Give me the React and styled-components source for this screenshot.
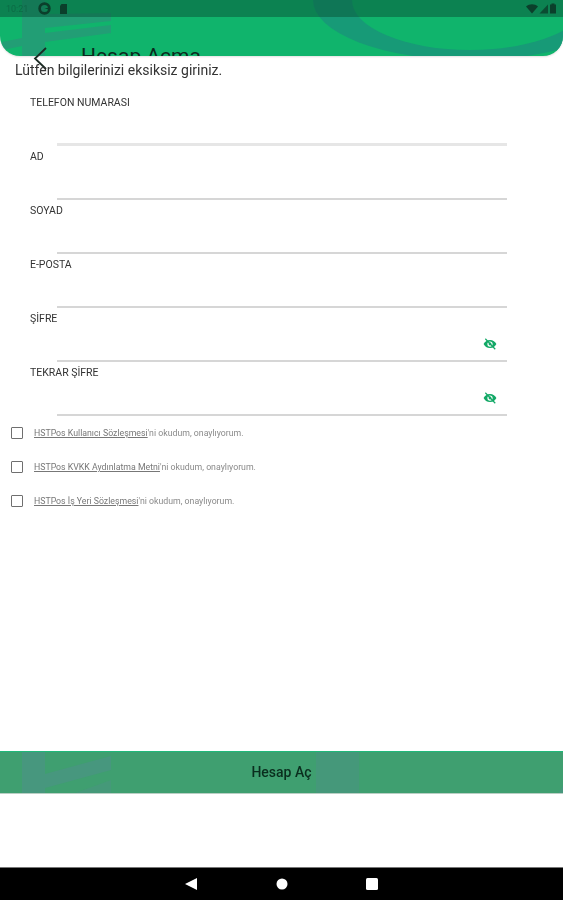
import React from 'react'
import styled, { createGlobalStyle } from 'styled-components'

const GlobalStyle = createGlobalStyle`
  html, body { margin: 0; padding: 0; background: #fff; }
  * { box-sizing: border-box; }
  body { font-family: Roboto, "Liberation Sans", sans-serif; }
`

const Screen = styled.div`
  position: relative;
  width: 563px;
  height: 900px;
  overflow: hidden;
  display: flex;
  flex-direction: column;
  background: #fff;
`

const Header = styled.header`
  position: relative;
  flex: 0 0 56px;
  background: #10b46c;
  border-radius: 0 0 20px 20px;
  overflow: hidden;
  box-shadow: 0 1px 2px rgba(0, 0, 0, 0.12);
`

const Art = styled.svg`
  position: absolute;
  inset: 0;
`

const StatusBar = styled.div`
  position: relative;
  height: 17px;
  padding: 0 6px 0 6px;
  display: flex;
  align-items: center;
  gap: 8px;
  background: rgba(10, 90, 60, 0.55);
  color: #0c5a3c;
`

const Time = styled.span`
  font-size: 9px;
  width: 24px;
  opacity: 0.6;
  filter: blur(0.4px);
`

const StatusRight = styled.div`
  margin-left: auto;
  display: flex;
  align-items: center;
  gap: 1px;
`

const Title = styled.h1`
  position: relative;
  margin: 0;
  padding: 27px 0 0 81px;
  font-size: 21px;
  line-height: 24px;
  font-weight: 400;
  color: #0a2a1d;
  white-space: nowrap;
`

const BackIcon = styled.svg`
  position: absolute;
  left: 32px;
  top: 46px;
`

const Intro = styled.p`
  margin: 0;
  padding: 6px 0 0 15px;
  height: 37px;
  font-size: 14px;
  line-height: 17px;
  color: #333;
  filter: blur(0.4px);
`

const Form = styled.div`
  display: flex;
  flex-direction: column;
`

const Field = styled.div`
  position: relative;
  height: 54px;
  width: 507px;
  padding-left: 30px;
  display: flex;
  flex-direction: column;
`

const Label = styled.label`
  font-size: 10.5px;
  line-height: 12px;
  height: 12px;
  margin-top: 4px;
  color: #333;
  filter: blur(0.4px);
`

const Underline = styled.div`
  margin: ${(p) => (p.$thick ? '34px' : '35px')} 0 0 27px;
  height: ${(p) => (p.$thick ? '3px' : '2px')};
  background: ${(p) => (p.$thick ? '#e6e6e6' : '#d6d6d6')};
`

const EyeIcon = styled.svg`
  position: absolute;
  right: 10px;
  top: 28px;
`

const Terms = styled.div`
  display: flex;
  flex-direction: column;
  gap: 20px;
  padding: 9px 0 0 11px;
`

const TermRow = styled.div`
  display: flex;
  align-items: center;
  gap: 11px;
  height: 14px;
`

const Box = styled.span`
  flex: 0 0 12px;
  height: 12px;
  border: 1.5px solid #6f6f6f;
  border-radius: 1px;
`

const TermText = styled.span`
  font-size: 8.75px;
  line-height: 12px;
  color: #8a8a8a;
  filter: blur(0.45px);
  a {
    color: #777;
    text-decoration: underline;
  }
`

const Spacer = styled.div`
  flex: 1;
`

const SubmitBar = styled.button`
  position: relative;
  flex: 0 0 43px;
  margin-bottom: 106px;
  padding: 0 0 2px;
  border: 0;
  border-top: 1px solid #1fb87a;
  border-bottom: 1px solid #b9cfc4;
  background: #3f9f70;
  overflow: hidden;
  font-family: inherit;
`

const SubmitLabel = styled.span`
  position: relative;
  font-size: 14px;
  font-weight: 500;
  color: #0a2e1e;
  filter: blur(0.3px);
`

const NavBar = styled.nav`
  position: absolute;
  left: 0;
  right: 0;
  bottom: 0;
  height: 33px;
  background: #000;
  border-top: 1px solid #777;
`

const NavIcons = styled.svg`
  display: block;
`

const fields = [
  { label: 'TELEFON NUMARASI', thick: true },
  { label: 'AD' },
  { label: 'SOYAD' },
  { label: 'E-POSTA' },
  { label: 'ŞİFRE', secret: true },
  { label: 'TEKRAR ŞİFRE', secret: true },
]

const terms = [
  { link: 'HSTPos Kullanıcı Sözleşmesi', rest: "'ni okudum, onaylıyorum." },
  { link: 'HSTPos KVKK Aydınlatma Metni', rest: "'ni okudum, onaylıyorum." },
  { link: 'HSTPos İş Yeri Sözleşmesi', rest: "'ni okudum, onaylıyorum." },
]

const Eye = () => (
  <EyeIcon width="14" height="14" viewBox="0 0 24 24" fill="#12a866">
    <path d="M12 5C7 5 2.7 8.1 1 12c1.7 3.9 6 7 11 7s9.3-3.1 11-7c-1.7-3.9-6-7-11-7zm0 11.500a4.500 4.500 0 1 1 0-9 4.500 4.500 0 0 1 0 9z" />
    <circle cx="12" cy="12" r="2.4" />
    <path d="M4 3l17 18" stroke="#12a866" strokeWidth="2" />
  </EyeIcon>
)

export default function App() {
  return (
    <Screen>
      <GlobalStyle />
      <Header>
        <Art width="563" height="56" viewBox="0 0 563 56">
          <path d="M22 0h23v14l66-1v8l-66 7v5l66-8v8l-66 9v14H22V46L2 50V42l20-4V0z" fill="#2f8f7c" opacity="0.6" />
          <ellipse cx="470" cy="0" rx="157" ry="60" fill="#179a77" />
          <ellipse cx="470" cy="0" rx="118" ry="50" fill="#10b46c" />
        </Art>
        <StatusBar>
          <Time>10:21</Time>
          <svg width="13" height="13" viewBox="0 0 24 24"><circle cx="12" cy="12" r="9" fill="none" stroke="#0b3f2b" strokeWidth="5" /><path d="M12 12l9-2v4z" fill="#0b3f2b" /></svg>
          <svg width="9" height="12" viewBox="0 0 18 24"><path d="M5 2h11v20H2V6z" fill="#0b3f2b" /></svg>
          <StatusRight>
            <svg width="12" height="10" viewBox="0 0 24 20"><path d="M12 19L0 5c7-6 17-6 24 0z" fill="#0b3f2b" /></svg>
            <svg width="9" height="10" viewBox="0 0 18 20"><path d="M18 1v18H1z" fill="#0b3f2b" opacity="0.8" /></svg>
            <svg width="8" height="11" viewBox="0 0 16 22"><path d="M5 1h6v2h3v18H2V3h3z" fill="#0b3f2b" /></svg>
          </StatusRight>
        </StatusBar>
        <Title>Hesap Açma</Title>
      </Header>
      <BackIcon width="18" height="24" viewBox="0 0 18 24">
        <path d="M14 2L3 12.500 14 23" fill="none" stroke="#1b2a24" strokeWidth="1.8" />
      </BackIcon>

      <Intro>Lütfen bilgilerinizi eksiksiz giriniz.</Intro>

      <Form>
        {fields.map((f) => (
          <Field key={f.label}>
            <Label>{f.label}</Label>
            <Underline $thick={f.thick} />
            {f.secret && <Eye />}
          </Field>
        ))}
      </Form>

      <Terms>
        {terms.map((t) => (
          <TermRow key={t.link}>
            <Box />
            <TermText><a>{t.link}</a>{t.rest}</TermText>
          </TermRow>
        ))}
      </Terms>

      <Spacer />

      <SubmitBar>
        <Art width="563" height="43" viewBox="0 0 563 43">
          <path d="M22 0h23v22l66-18v14l-66 18v7H22z" fill="#4f8f8a" opacity="0.55" />
          <path d="M111 28v15H70z" fill="#4f8f8a" opacity="0.35" />
          <path d="M316 0h43v43h-43z" fill="#4f8f8a" opacity="0.4" />
          <path d="M557 43l6-9v9z" fill="#4f8f8a" opacity="0.5" />
        </Art>
        <SubmitLabel>Hesap Aç</SubmitLabel>
      </SubmitBar>

      <NavBar>
        <NavIcons width="563" height="32" viewBox="0 0 563 32">
          <path d="M197 10v12l-12-6z" fill="#fff" />
          <circle cx="282" cy="16" r="5.500" fill="#fff" />
          <rect x="366" y="10" width="12" height="12" rx="1.500" fill="#fff" />
        </NavIcons>
      </NavBar>
    </Screen>
  )
}
